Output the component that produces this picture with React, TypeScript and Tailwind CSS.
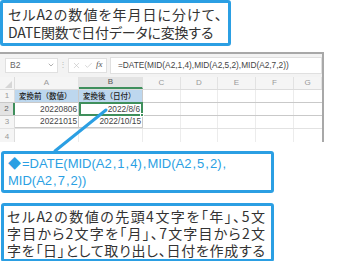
import { X, Check, ChevronDown } from "lucide-react"

const cols = ["A", "B", "C", "D", "E", "F", "G"]
const widths = ["w-[64px]", "w-[64px]", "w-[38px]", "w-[37px]", "w-[38px]", "w-[38px]", "flex-1"]

// カンマの前後に少し余白を入れる
function Formula({ text }: { text: string }) {
  const parts = text.split(",")
  return (
    <>
      {parts.map((p, i) => (
        <span key={i}>
          {p}
          {i < parts.length - 1 && <span className="mx-[1px]">,</span>}
        </span>
      ))}
    </>
  )
}

export default function App() {
  return (
    <div className="relative w-[360px] h-[261px] bg-white overflow-hidden font-['Noto_Sans_CJK_JP',sans-serif]">
      <div className="flex flex-col">
        {/* 見出し */}
        <div className="w-[231px] h-[46px] border-[3px] border-[#2b9fe3] rounded-[3px] pl-[5px] pr-[6px] pt-[2px] text-[14px] leading-[18px] text-[#333] whitespace-nowrap [font-feature-settings:'palt']">
          <div className="text-justify [text-align-last:justify]">セルA2の数値を年月日に分けて、</div>
          <div className="tracking-[-0.2px]">DATE関数で日付データに変換する</div>
        </div>

        {/* Excel */}
        <div className="mt-[6px] w-[324px] h-[90px] border-t-2 border-r-2 border-[#a8a8a8] bg-[#f3f3f3] font-['Liberation_Sans','Noto_Sans_CJK_JP',sans-serif] overflow-hidden">
          <div className="h-[21px] flex items-center pl-[5px] pt-[1px]">
            <div className="w-[53px] h-[15px] bg-white border border-[#e0e0e0] flex items-center justify-between pl-[4px] pr-[2px] text-[8.5px] text-[#666]">
              <span>B2</span>
              <ChevronDown size={8} className="text-[#888]" />
            </div>
            <span className="w-[10px] text-center text-[8px] text-[#bbb]">⋮</span>
            <div className="w-[39px] h-[15px] bg-white border border-[#e0e0e0] flex items-center gap-[3px] pl-[3px] text-[#bbb]">
              <X size={9} strokeWidth={1.5} />
              <Check size={9} strokeWidth={1.5} />
              <span className="font-['Liberation_Serif',serif] italic text-[9px] text-[#555]">fx</span>
            </div>
            <div className="ml-[3px] flex-1 h-[17px] bg-white border border-[#e0e0e0] flex items-center pl-[7px] text-[8.3px] text-[#444] whitespace-nowrap">
              =DATE(MID(A2,1,4),MID(A2,5,2),MID(A2,7,2))
            </div>
          </div>
          <div className="h-[2px]" />
          <div className="bg-white">
            {/* 列見出し */}
            <div className="flex h-[13px] bg-[#f5f5f5] border-b border-[#dcdcdc] text-[8px] text-[#999]">
              <div className="w-[15px] border-r border-[#dcdcdc] relative">
                <div className="absolute right-[2px] bottom-[1px] w-0 h-0 border-l-[7px] border-l-transparent border-b-[7px] border-b-[#d6d6d6]" />
              </div>
              {cols.map((c, i) => (
                <div
                  key={c}
                  className={`${widths[i]} flex items-center justify-center border-r border-[#e2e2e2] ${
                    c === "B" ? "bg-[#e3e3e3] border-b-2 border-b-[#3f8f5c] text-[#555]" : ""
                  }`}
                >
                  {c}
                </div>
              ))}
            </div>

            {/* 1行目 */}
            <div className="flex h-[13px] border-b border-[#c9c9c9] text-[8px]">
              <div className="w-[15px] bg-[#f5f5f5] border-r border-[#dcdcdc] flex items-center justify-center text-[#999]">1</div>
              <div className="w-[64px] bg-[#bdd7ee] border-r border-[#c9c9c9] flex items-center pl-[4px] text-[7.5px] text-[#222] font-['Noto_Sans_CJK_JP',sans-serif] font-medium">
                変換前（数値）
              </div>
              <div className="w-[64px] bg-[#bdd7ee] border-r border-[#c9c9c9] flex items-center pl-[4px] text-[7.5px] text-[#222] font-['Noto_Sans_CJK_JP',sans-serif] font-medium">
                変換後（日付）
              </div>
              <div className="w-[38px] border-r border-[#ececec]" />
              <div className="w-[37px] border-r border-[#ececec]" />
              <div className="w-[38px] border-r border-[#ececec]" />
              <div className="w-[38px] border-r border-[#ececec]" />
              <div className="flex-1" />
            </div>

            {/* 2行目 */}
            <div className="flex h-[13px] border-b border-[#c9c9c9] text-[8.3px] text-[#444]">
              <div className="w-[15px] bg-[#e3e3e3] border-r-2 border-[#3f8f5c] flex items-center justify-center text-[8px] text-[#666]">2</div>
              <div className="w-[64px] border-r border-[#c9c9c9] flex items-center justify-end pr-[1px]">20220806</div>
              <div className="relative w-[64px] border-2 border-[#3f8f5c] -my-[1px] flex items-center justify-end pr-[1px]">
                2022/8/6
                <div className="absolute -right-[3px] -bottom-[3px] w-[4px] h-[4px] bg-[#3f8f5c] border border-white" />
              </div>
              <div className="w-[38px] border-r border-[#ececec]" />
              <div className="w-[37px] border-r border-[#ececec]" />
              <div className="w-[38px] border-r border-[#ececec]" />
              <div className="w-[38px] border-r border-[#ececec]" />
              <div className="flex-1" />
            </div>

            {/* 3行目 */}
            <div className="flex h-[13px] border-b border-[#e2e2e2] text-[8.3px] text-[#444]">
              <div className="w-[15px] bg-[#f5f5f5] border-r border-[#dcdcdc] flex items-center justify-center text-[8px] text-[#999]">3</div>
              <div className="w-[64px] border-r border-b border-[#c9c9c9] flex items-center justify-end pr-[1px]">20221015</div>
              <div className="w-[64px] border-r border-b border-[#c9c9c9] flex items-center justify-end pr-[1px]">2022/10/15</div>
              <div className="w-[38px] border-r border-[#ececec]" />
              <div className="w-[37px] border-r border-[#ececec]" />
              <div className="w-[38px] border-r border-[#ececec]" />
              <div className="w-[38px] border-r border-[#ececec]" />
              <div className="flex-1" />
            </div>

            {/* 4行目 */}
            <div className="flex h-[15px] text-[8px]">
              <div className="w-[15px] bg-[#f5f5f5] border-r border-[#dcdcdc] flex items-center justify-center text-[#999]">4</div>
              <div className="w-[64px] border-r border-[#ececec]" />
              <div className="w-[64px] border-r border-[#ececec]" />
              <div className="w-[38px] border-r border-[#ececec]" />
              <div className="w-[37px] border-r border-[#ececec]" />
              <div className="w-[38px] border-r border-[#ececec]" />
              <div className="w-[38px] border-r border-[#ececec]" />
              <div className="flex-1" />
            </div>
          </div>
        </div>

        {/* 数式 */}
        <div className="mt-[9px] ml-[1px] w-[273px] h-[42px] border-[3px] border-[#2b9fe3] rounded-[3px] px-[4px] pt-[1px] text-[13px] leading-[17px] text-[#2b9fe3] whitespace-nowrap font-['Liberation_Sans','Noto_Sans_CJK_JP',sans-serif]">
          <div>
            <span className="mr-[1px]">◆</span>
            <Formula text="=DATE(MID(A2,1,4),MID(A2,5,2)," />
          </div>
          <div>
            <Formula text="MID(A2,7,2))" />
          </div>
        </div>

        {/* 説明 */}
        <div className="mt-[10px] ml-[1px] w-[273px] h-[59px] border-[3px] border-[#2b9fe3] rounded-[3px] pl-[3px] pr-[6px] pt-[2px] text-[14px] leading-[17px] text-[#333] whitespace-nowrap [font-feature-settings:'palt']">
          <div className="text-justify [text-align-last:justify]">セルA2の数値の先頭4文字を「年」、5文</div>
          <div className="text-justify [text-align-last:justify]">字目から2文字を「月」、7文字目から2文</div>
          <div className="text-justify [text-align-last:justify]">字を「日」として取り出し、日付を作成する</div>
        </div>
      </div>

      {/* 引き出し線 */}
      <svg className="absolute left-0 top-0 pointer-events-none" width="360" height="261">
        <line x1="106" y1="110" x2="55" y2="151" stroke="#2b9fe3" strokeWidth="3" strokeLinecap="round" />
      </svg>
    </div>
  )
}
